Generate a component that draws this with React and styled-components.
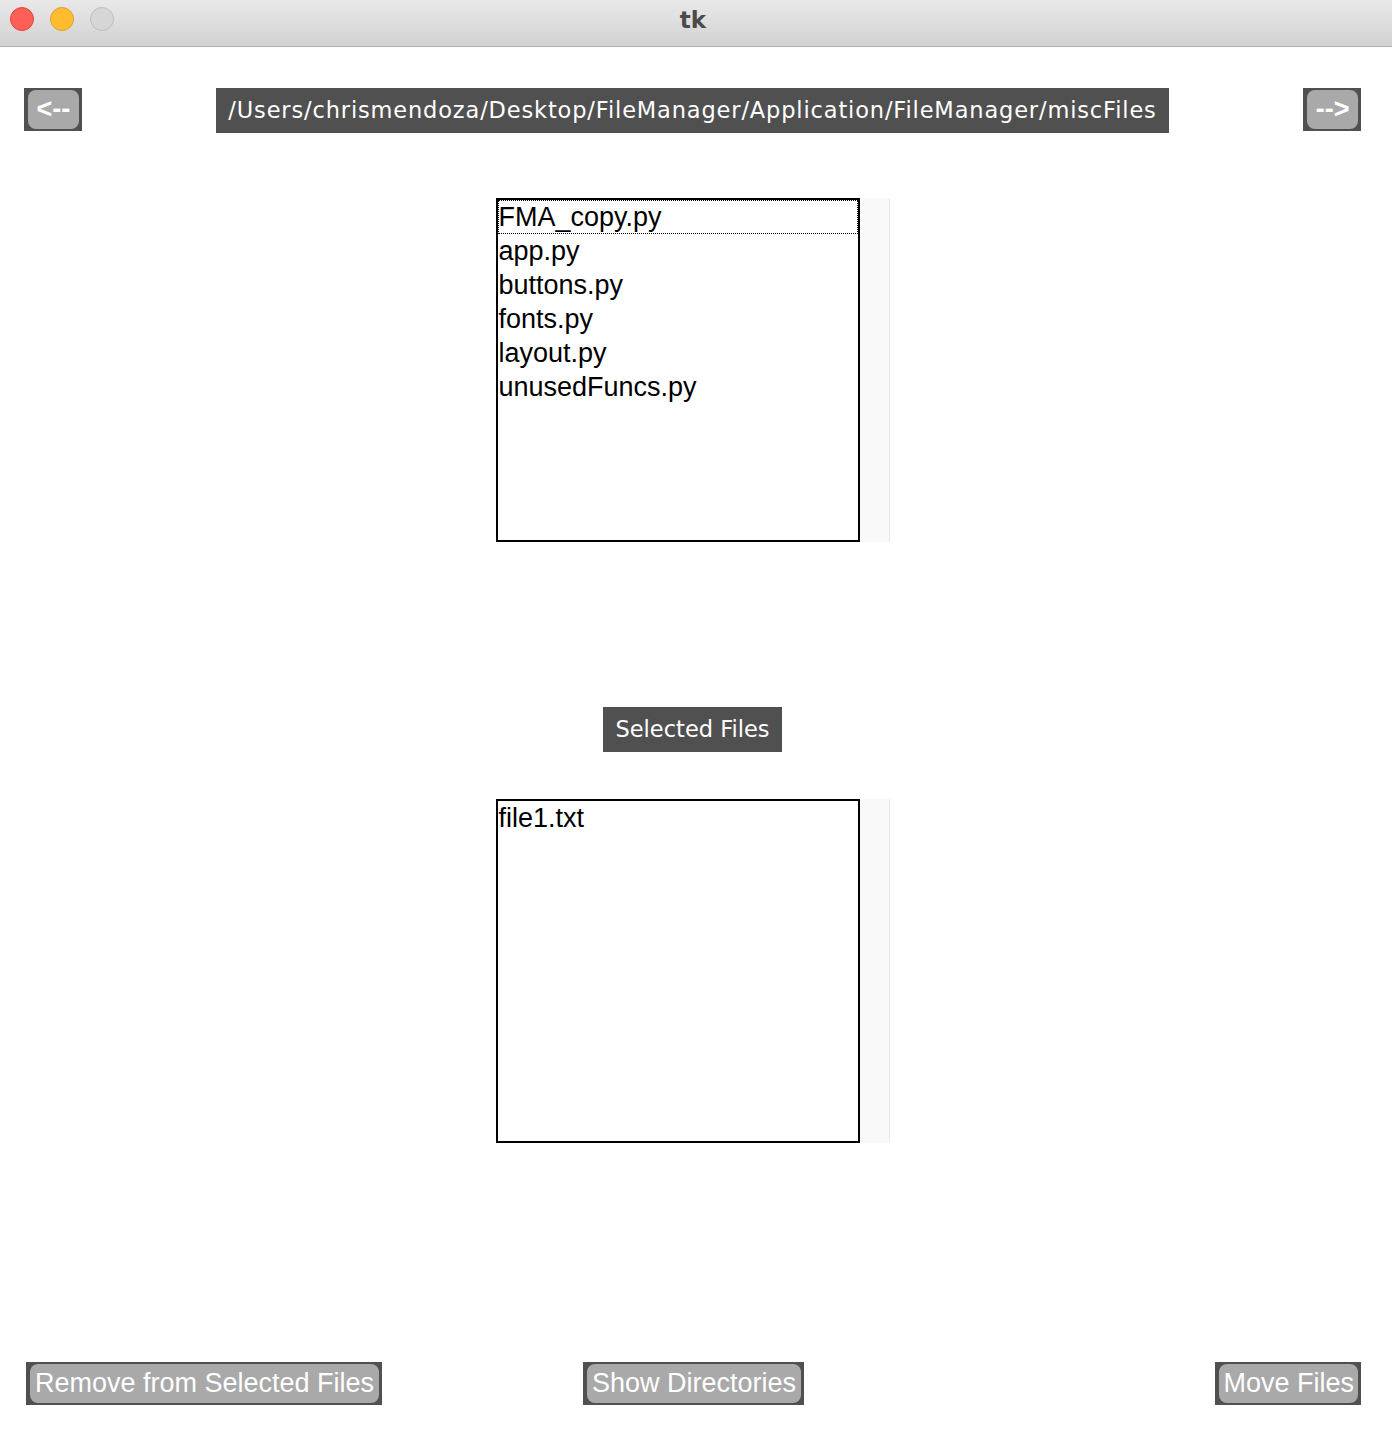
import styled, { createGlobalStyle } from 'styled-components';

const GlobalStyle = createGlobalStyle`
  html, body {
    margin: 0;
    padding: 0;
    background: #ffffff;
  }
  * {
    box-sizing: border-box;
  }
`;

const Window = styled.div`
  width: 1392px;
  height: 1444px;
  display: flex;
  flex-direction: column;
  background: #ffffff;
  overflow: hidden;
`;

const TitleBar = styled.header`
  position: relative;
  height: 47px;
  flex-shrink: 0;
  display: flex;
  align-items: center;
  justify-content: center;
  padding-right: 6px;
  background: linear-gradient(#e9e9e9, #d2d2d2);
  border-bottom: 1px solid #b1b1b1;
`;

const Lights = styled.div`
  position: absolute;
  left: 10px;
  top: 7px;
  display: flex;
  gap: 16px;
`;

const Light = styled.span`
  width: 24px;
  height: 24px;
  border-radius: 50%;
  background: ${(p) => p.$fill};
  border: 1px solid ${(p) => p.$edge};
`;

const Title = styled.h1`
  margin: 0 0 6px 0;
  font-family: 'DejaVu Sans', sans-serif;
  font-weight: bold;
  font-size: 23px;
  color: #4b4b4b;
`;

const Body = styled.main`
  flex: 1;
  display: flex;
  flex-direction: column;
  padding: 41px 31px 39px 24px;
`;

const TopRow = styled.div`
  display: grid;
  grid-template-columns: auto 1fr auto;
  align-items: start;
`;

const Center = styled.div`
  display: flex;
  justify-content: center;
  margin-top: ${(p) => p.$top}px;
`;

const ButtonFrame = styled.div`
  height: 43px;
  padding: 2px 3px 2px 4px;
  background: #505050;
  display: flex;
`;

const Button = styled.button`
  border: none;
  border-radius: 8px;
  background: #a9a9a9;
  color: #ffffff;
  font-family: 'Liberation Sans', Arial, sans-serif;
  font-size: ${(p) => p.$size || 27}px;
  font-weight: ${(p) => (p.$bold ? 'bold' : 'normal')};
  padding: 0 ${(p) => p.$pad || 5}px;
  line-height: 39px;
  cursor: pointer;
  white-space: nowrap;
`;

const Label = styled.div`
  height: 45px;
  padding: 0 12px;
  background: #505050;
  color: #ffffff;
  font-family: 'DejaVu Sans', sans-serif;
  font-size: 22.5px;
  letter-spacing: ${(p) => p.$spacing || 0}px;
  line-height: 44px;
  white-space: nowrap;
`;

const ListFrame = styled.div`
  display: flex;
  height: 344px;
`;

const ListBox = styled.ul`
  width: 364px;
  height: 100%;
  margin: 0;
  padding: 0;
  list-style: none;
  border: 2px solid #000000;
  background: #ffffff;
`;

const Item = styled.li`
  height: 34px;
  padding-left: 0;
  font-family: 'Liberation Sans', Arial, sans-serif;
  font-size: 27px;
  line-height: 33px;
  color: #000000;
  border: 1px dotted ${(p) => (p.$focus ? '#000000' : 'transparent')};
  white-space: nowrap;
`;

const ScrollTrack = styled.div`
  width: 30px;
  height: 100%;
  background: #f9f9f9;
  border-right: 1px solid #e8e8e8;
`;

const BottomRow = styled.div`
  margin-top: auto;
  display: grid;
  grid-template-columns: 1fr auto 1fr;
  padding-left: 2px;
`;

const Side = styled.div`
  display: flex;
  justify-content: ${(p) => p.$align};
`;

const files = ['FMA_copy.py', 'app.py', 'buttons.py', 'fonts.py', 'layout.py', 'unusedFuncs.py'];
const selected = ['file1.txt'];

function FileList({ items }) {
  return (
    <ListFrame>
      <ListBox>
        {items.map((name, i) => (
          <Item key={name} $focus={items.length > 1 && i === 0}>
            {name}
          </Item>
        ))}
      </ListBox>
      <ScrollTrack />
    </ListFrame>
  );
}

function App() {
  return (
    <Window>
      <GlobalStyle />
      <TitleBar>
        <Lights>
          <Light $fill="#fe5f57" $edge="#e1443e" />
          <Light $fill="#febc2e" $edge="#dfa123" />
          <Light $fill="#d6d6d6" $edge="#bebebe" />
        </Lights>
        <Title>tk</Title>
      </TitleBar>
      <Body>
        <TopRow>
          <ButtonFrame>
            <Button $bold $pad={8.5}>&lt;--</Button>
          </ButtonFrame>
          <Side $align="center">
            <Label $spacing={0.85}>
              /Users/chrismendoza/Desktop/FileManager/Application/FileManager/miscFiles
            </Label>
          </Side>
          <ButtonFrame>
            <Button $bold $pad={8.5}>--&gt;</Button>
          </ButtonFrame>
        </TopRow>
        <Center $top={65}>
          <FileList items={files} />
        </Center>
        <Center $top={165}>
          <Label>Selected Files</Label>
        </Center>
        <Center $top={47}>
          <FileList items={selected} />
        </Center>
        <BottomRow>
          <Side $align="flex-start">
            <ButtonFrame>
              <Button>Remove from Selected Files</Button>
            </ButtonFrame>
          </Side>
          <ButtonFrame>
            <Button>Show Directories</Button>
          </ButtonFrame>
          <Side $align="flex-end">
            <ButtonFrame>
              <Button $pad={4}>Move Files</Button>
            </ButtonFrame>
          </Side>
        </BottomRow>
      </Body>
    </Window>
  );
}

export default App;
